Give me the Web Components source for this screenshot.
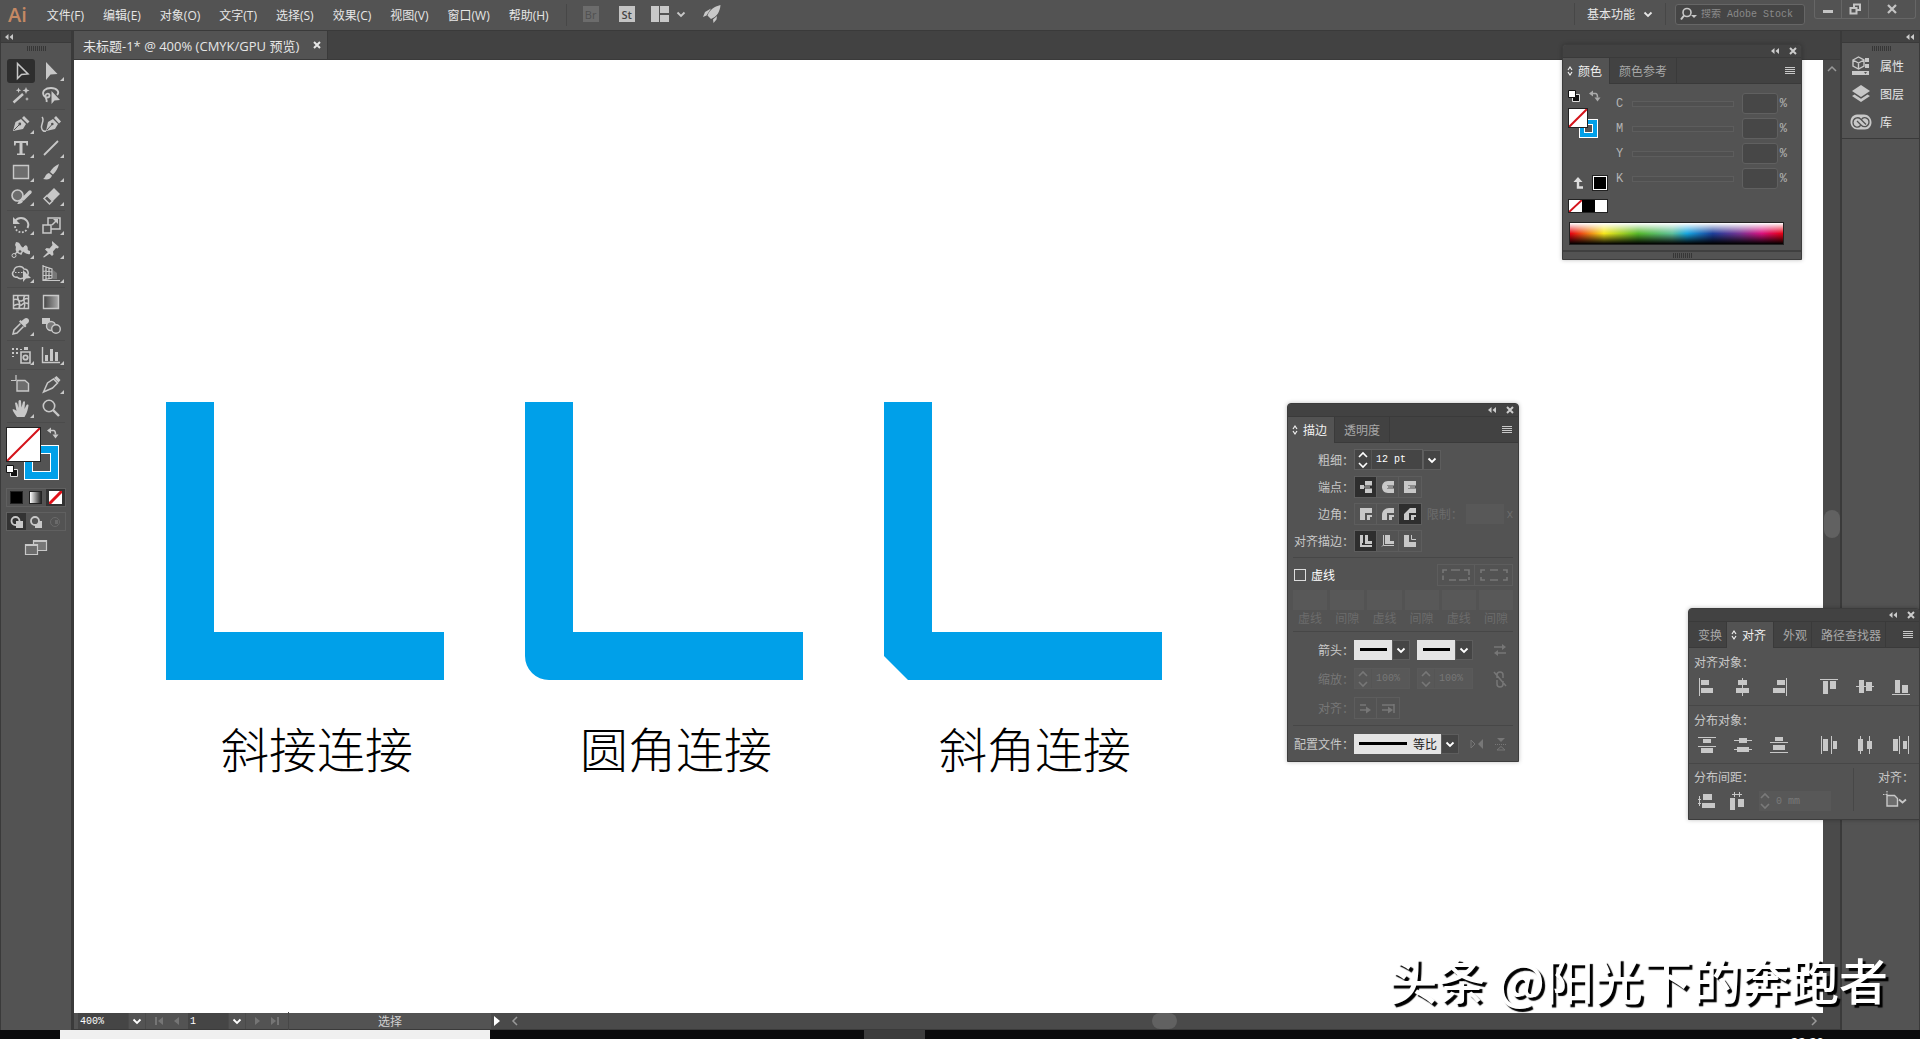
<!DOCTYPE html>
<html lang="zh-CN">
<head>
<meta charset="utf-8">
<title>未标题-1* @ 400% (CMYK/GPU 预览)</title>
<style>
  html, body { height: 100%; }
  body {
    margin: 0;
    overflow: hidden;
    font-family: "Open Sans", "Noto Sans CJK SC", sans-serif;
    font-size: 12px;
    color: #e6e6e6;
    background: #535353;
  }
</style>
</head>
<body>
<app-window></app-window>

<script>
// icons drawn with currentColor: [width, height, markup]
const L = 'fill="none" stroke="currentColor"';
const CUT = 'fill="none" stroke="#535353"';
const ICONS = {
  // small marks
  collapse: [10, 8, `<path d="M4.5 1v6L1 4zM9 1v6L5.5 4z"/>`],
  close: [10, 10, `<path ${L} stroke-width="2" d="M2 2l6 6M8 2L2 8"/>`],
  chevron: [12, 12, `<path ${L} stroke-width="1.8" d="M2.5 4.5L6 8l3.5-3.5"/>`],
  spin: [12, 18, `<path ${L} stroke-width="1.6" d="M2 6l4-4 4 4M2 12l4 4 4-4"/>`],
  updown: [6, 12, `<path ${L} stroke-width="1.2" d="M1 5l2-3 2 3M1 7l2 3 2-3"/>`],
  menu: [12, 10, `<path ${L} d="M1 1.5h10M1 3.5h10M1 5.5h10M1 7.5h10"/>`],
  grip: [20, 5, `<path fill="none" stroke="#363636" d="M1.5 0v5M3.5 0v5M5.5 0v5M7.5 0v5M9.5 0v5M11.5 0v5M13.5 0v5M15.5 0v5M17.5 0v5M19.5 0v5"/>`],
  up: [12, 12, `<path ${L} stroke-width="1.5" d="M2 8l4-4 4 4"/>`],
  left: [10, 12, `<path ${L} stroke-width="1.5" d="M7 2L3 6l4 4"/>`],
  right: [10, 12, `<path ${L} stroke-width="1.5" d="M3 2l4 4-4 4"/>`],
  first: [12, 12, `<path d="M2 2h2v8H2zM10 2v8L5 6z"/>`],
  prev: [8, 12, `<path d="M6 2v8L1 6z"/>`],
  next: [8, 12, `<path d="M2 2v8l5-4z"/>`],
  last: [12, 12, `<path d="M8 2h2v8H8zM2 2v8l5-4z"/>`],
  play: [8, 12, `<path d="M1 1v10l6-5z"/>`],
  // top bar
  arrange: [18, 16, `<path d="M0 0h8v16H0zM9 0h9v7H9zM9 9h9v7H9z"/>`],
  rocket: [18, 18, `<path d="M17.500 0C11 1.500 6.500 5 4.500 10.500L8 14c5.500-2 9-7 9.500-14zM8 3.500L2 7 0 12l3.500-1.500zM14 11l-4 3.500.500 3.500 3-3.500z"/>`],
  search: [18, 14, `<circle cx="7" cy="5.5" r="4" ${L} stroke-width="1.6"/><path ${L} stroke-width="2" d="M4 8.5L1 12.5"/><path d="M11 8h6l-3 3z"/>`],
  minimize: [12, 12, `<path d="M1 7h10v3H1z"/>`],
  restore: [12, 12, `<path ${L} stroke-width="2" d="M5 4V1.5h6V7H8.5M1.5 5h6v5.5h-6z"/>`],
  shut: [12, 12, `<path ${L} stroke-width="2.2" d="M2 2l8 8M10 2l-8 8"/>`],
  // right dock
  properties: [20, 20, `<path ${L} stroke-width="1.4" d="M2 4l5.5-3L13 4v6l-5.5 3L2 10zM2 4l5.5 3L13 4M7.5 7v6"/><path d="M14 2h4v4h-4zM14 8h4v4h-4zM1 15h17v4H1z"/><path fill="#535353" d="M13 16h3l-1.5 2z"/>`],
  layers: [20, 18, `<path d="M10 0l9 6-9 6-9-6z"/><path d="M3.5 9.5L1 11l9 6 9-6-2.5-1.5L10 13.8z"/>`],
  library: [22, 16, `<path d="M8 .5C3 0 .5 4 .5 8s3 7.5 7.5 7.5h7c4 0 6.500-3.500 6.500-7C21.500 4 18 .5 14 .5z"/><path ${CUT} stroke-width="1.3" d="M10.5 11.5c-2.5 3-7.5 1.5-7.5-3S8 2.500 10.500 5l5.500 5.500M7 7l4 4c3.500 3.500 8 1 8-3S13.500 2 11.500 5.500"/>`],
  // toolbox
  select: [28, 24, `<path ${L} stroke-width="1.5" d="M10.5 4.5v15l4-4 6.5-.5z"/>`],
  direct: [28, 24, `<path d="M9 3v18l4.5-5.5 7-.5z"/>`],
  wand: [28, 24, `<path ${L} stroke-width="2.5" d="M6.5 19.5L16 11"/><path d="M19 4l1 2.5 2.5 1-2.5 1-1 2.5-1-2.5-2.5-1 2.5-1zM11.5 4.5l.8 2 2 .8-2 .7-.8 2-.7-2-2-.7 2-.8zM20 14l.6 1.4 1.4.6-1.4.6L20 18l-.6-1.4L18 16l1.4-.6z"/>`],
  lasso: [28, 24, `<path ${L} stroke-width="1.8" d="M20 12c3-3 0-7-6-7S5 8.5 6.5 12s6 3 6 .5-3.5-2.5-4 0 2 4 1 6.5"/><path d="M14.5 8v13l3-3.5 5.5-.5z"/>`],
  pen: [28, 24, `<path d="M6 19l2.5-9 5.5-3 5 5-3 5zM15 6l2-2 5.5 5.5-2 2z"/><path ${CUT} d="M7 18l5.5-5.5"/><circle cx="12.8" cy="12" r="1.4" fill="#535353"/>`],
  curve: [28, 24, `<path d="M9 19l2-9 5-3 5 5-3 5zM17 6l2-2 5 5.5-2 2z"/><path ${CUT} d="M10 18l5-5.5"/><circle cx="15.3" cy="12" r="1.3" fill="#535353"/><path ${L} stroke-width="1.5" d="M5 5c3 3-1 7-.5 10.5S7 19.5 9 19"/>`],
  type: [28, 24, `<path d="M7 5h14v4.5h-1.5L19 7h-3.5v10.5H18V19h-8v-1.5h2.5V7H9l-.5 2.5H7z"/>`],
  line: [28, 24, `<path ${L} stroke-width="1.8" d="M7 19L21 5"/>`],
  rect: [28, 24, `<path fill="#6d6d6d" stroke="currentColor" stroke-width="1.4" d="M6.5 5.5h15v13h-15z"/>`],
  brush: [28, 24, `<path d="M22 4c-4 1.5-7 4.5-9 8l3 2.5c3-3 5-6 6-10.500zM12 13l3 2.500c-1 4-5 4.500-9 3.500 2.500-1 2-5 6-6z"/>`],
  blob: [28, 24, `<circle cx="10.5" cy="11.5" r="5.5" fill="#6d6d6d" stroke="currentColor" stroke-width="1.6"/><path ${L} stroke-width="3.5" stroke-linecap="round" d="M23 8l-7 7"/><path d="M10 20c1.5-1 1.5-4 4-4.5l2 2c-1 2-3.5 2.5-6 2.5z"/>`],
  eraser: [28, 24, `<path d="M17 4l6 6-7 7-6-6z"/><path ${L} stroke-width="1.5" d="M10 11.5l5.5 5.5-3 3L7 14.5z"/>`],
  rotate: [28, 24, `<path ${L} stroke-width="2" d="M8 8c3-4 9-4 12 0 1.5 2 1.5 5 .5 7"/><path d="M6 4v7h7z"/><path ${L} stroke-width="1.8" stroke-dasharray="1.8 1.6" d="M19.5 17c-3 3.5-9 3-11-1.5l-.8-3"/>`],
  scale: [28, 24, `<path ${L} stroke-width="1.5" d="M6 12h8v8H6zM11 12V5h12v11h-9M15 12l5-5"/><path d="M21 6v5l-5-5z"/>`],
  warp: [28, 24, `<path d="M9 5c4 0 4 3 6 5s3-4 5-1-1 4 3 5v3c-3 1-6-2-8-3s-5 3-6 0 1-3-1-6z"/><path ${L} stroke-width="1.4" d="M6 19l4-4 4 2 4-8"/><circle cx="7" cy="18.5" r="2" fill="#535353" stroke="currentColor"/><circle cx="13" cy="14.5" r="1.8" fill="#535353" stroke="currentColor"/>`],
  pin: [28, 24, `<path d="M15 4l7 6-1.5 1.5-1.5-.5-3 3.5.5 3L15 19l-7-6.5L9.5 11l3 .5 3-3.5-.5-2zM11 15l2 1.5L7 20.5l-1-.5z"/>`],
  builder: [28, 24, `<path ${L} stroke-width="1.5" d="M19 15c4-2 2-7-2-7-2-4-10-3-10 2-3 2-1 7 3 6 2 2 4 2 6 1"/><path ${L} stroke-dasharray="1.5 1.5" d="M8 11.5h12"/><path d="M16 9v12l3-3.5 5-.5z"/>`],
  perspective: [28, 24, `<path fill="#777" d="M16 9l4 3v6h-4z"/><path ${L} stroke-width="1.2" d="M6 4v16M6 5l9 3v9L6 19M9 6v12.5M12 7v10.5M6 10l9 1M6 14.5h9M6 19.5h17"/>`],
  mesh: [28, 24, `<path ${L} stroke-width="1.5" d="M6.5 5.5h15v13h-15zM6.5 10c4-3 5 2 8 1s4-4 7-2M6.5 16c5-4 7 0 8-1s4-3 7-1M11 5.5c-2 4 4 6 1 13M18 5.5c-4 4 2 7-1 13"/>`],
  gradient: [28, 24, `<defs><linearGradient id="g"><stop stop-color="#444"/><stop offset="1" stop-color="#aaa"/></linearGradient></defs><path fill="url(#g)" stroke="currentColor" stroke-width="1.4" d="M6.5 5.5h15v13h-15z"/>`],
  dropper: [28, 24, `<path d="M17 5c3-3 7 1 4 4l-2.500 2 1 1-1.500 1.500-6-6L13.500 6l1 1z"/><path ${L} stroke-width="1.5" d="M13.5 9.5L7 16l-1 4 4-1 6.5-6.5"/>`],
  blend: [28, 24, `<path d="M5 4h8v6H5z"/><circle cx="14" cy="12" r="4.5" fill="#777" stroke="currentColor" stroke-width="1.4"/><circle cx="19" cy="15" r="4.3" fill="#535353" stroke="currentColor" stroke-width="1.4"/>`],
  spray: [28, 24, `<path d="M5 5h2v2H5zM9 5h2v2H9zM5 9h2v2H5zM13 6h2v1h-2zM9 9h2v2H9zM5 13h2v1H5zM17 4h4v3h-4z"/><path ${L} stroke-width="1.6" d="M14 9h9v11h-9z"/><circle cx="18.5" cy="14.5" r="2.2" ${L} stroke-width="1.8"/>`],
  graph: [28, 24, `<path ${L} stroke-width="1.4" d="M5.5 4v15.5H23"/><path d="M8 12h3v6H8zM13 6h3v12h-3zM18 9h3v9h-3z"/>`],
  artboard: [28, 24, `<path ${L} stroke-width="1.2" d="M9 3v5M4 8.5h5"/><path fill="#6d6d6d" stroke="currentColor" stroke-width="1.4" d="M10 8.5h8l3.5 3v7.5H10z"/>`],
  slice: [28, 24, `<path ${L} stroke-width="1.5" d="M6.5 20l4-9 6-4 4 4-5 5z"/><path d="M17 6l2.5-2 4 4-2 2.5z"/>`],
  hand: [28, 24, `<path d="M10 21c-2-3-4-5-4.500-7.500 1.500-.8 2.500 0 4 1.500L8 7c1.500-1 2 0 2.500 1l1 4V5c1-1.500 2.200-1 2.500 0l.5 6.500L16 6c1-1.200 2-.5 2 .5L17.500 13l2-4c1.200-1 2.200-.3 2 .8-1 5-1.500 7.500-4 11.200z"/>`],
  zoom: [28, 24, `<circle cx="12" cy="10" r="5.7" ${L} stroke-width="1.6"/><path ${L} stroke-width="2.4" d="M16 14l6 6"/>`],
  screens: [24, 18, `<path fill="#777" stroke="currentColor" stroke-width="1.2" d="M9.5 1.5h13v10h-13z"/><path fill="#6d6d6d" stroke="currentColor" stroke-width="1.2" d="M1.5 5.5h12v10h-12z"/><path d="M9 1h14v2H9zM1 5h13v2H1z"/>`],
  swap: [12, 12, `<path ${L} stroke-width="1.6" d="M3 3.5h3.5c2 0 2 1.5 2 4"/><path d="M0 3.5L4 .5v6zM5.5 7.5h6l-3 4z"/>`],
  defaults: [12, 12, `<path fill="#111" stroke="#ddd" d="M4.5 4.5h7v7h-7z"/><path fill="#fff" stroke="#111" d="M.5.5h7v7h-7z"/>`],
  drawA: [16, 16, `<circle cx="6.5" cy="7" r="4" ${L} stroke-width="1.8"/><path d="M7 7h7v7H7z"/>`],
  drawB: [16, 16, `<path d="M7 7h7v7H7z"/><circle cx="7" cy="7" r="4" fill="#535353" stroke="currentColor" stroke-width="1.8"/>`],
  drawC: [16, 16, `<circle cx="8" cy="8" r="4.5" ${L}/><path d="M8 6h3v4H8z"/>`],
  revert: [12, 12, `<path ${L} stroke-width="2.4" d="M5 4v6.5h5"/><path d="M5 0l4.5 5h-9z"/>`],
  // stroke panel
  capButt: [16, 16, `<path d="M7 2h7v4.5H7zM7 9.5h7V14H7zM2 6h4v4H2zM6 7.5h6v1H6z"/>`],
  capRound: [16, 16, `<path d="M8 2h6v4.5H7v3h7V14H8C0 14 0 2 8 2z"/><path d="M6 7h2v2H6zM8 7.5h5v1H8z"/>`],
  capSquare: [16, 16, `<path d="M2 2h12v4.5H6v3h8V14H2z"/><path d="M6 7h2v2H6zM8 7.5h5v1H8z"/>`],
  joinMiter: [16, 16, `<path d="M2 2h12v5H7v7H2z"/><path d="M9 9h5v2h-2v3H9z"/>`],
  joinRound: [16, 16, `<path d="M14 2v5H7v7H2V9c0-4 3-7 7-7z"/><path d="M9 9h5v2h-2v3H9z"/>`],
  joinBevel: [16, 16, `<path d="M14 2v5H7v7H2V8l6-6z"/><path d="M9 9h5v2h-2v3H9z"/>`],
  alignC: [16, 16, `<path d="M2 2h3v8H4v2h10v2H2zM7 2h3v6h4v3H7z"/>`],
  alignI: [16, 16, `<path ${L} d="M3.5 2v10L2 13.5M3.5 12.5H14"/><path d="M5 2h5v6h4v3H5z"/>`],
  alignO: [16, 16, `<path d="M2 2h5v7h7v5H2z"/><path ${L} d="M9.5 2v4.5H14"/>`],
  dashA: [30, 14, `<path ${L} stroke-width="1.6" d="M2 12V7.5M2 5V2h4M10 2h9M23 2h5v5M28 12v-3M8 12h7M18 12h8"/>`],
  dashB: [30, 14, `<path ${L} stroke-width="1.6" d="M2 5V2h4M11 2h8M24 2h4v3M2 9v3h4M11 12h8M24 12h4V9"/>`],
  exchange: [14, 12, `<path ${L} stroke-width="1.6" d="M1 3h9M4 9h9"/><path d="M9 0l4 3-4 3zM5 6L1 9l4 3z"/>`],
  unlink: [14, 18, `<path ${L} stroke-width="1.5" d="M4 8V5a3 3 0 0 1 6 0v3M4 10v4a3 3 0 0 0 6 0v-3M1 2l12 14"/>`],
  tipA: [16, 12, `<path ${L} stroke-width="1.5" d="M2 3h6M2 8h6"/><path d="M8 4.5l5 3.5-5 3.5z"/>`],
  tipB: [16, 12, `<path ${L} stroke-width="1.5" d="M2 3h12M2 8h6M14 2v9"/><path d="M8 4.5l5 3.5-5 3.5z"/>`],
  flipH: [16, 12, `<path ${L} d="M2 2l4 4-4 4z"/><path d="M14 1v10L9 6z"/>`],
  flipV: [12, 14, `<path d="M2 1h8L6 5z"/><path ${L} stroke-dasharray="1 1" d="M0 7.5h12"/><path ${L} d="M2 13h8L6 9.5z"/>`],
  // align panel
  alLeft: [18, 18, `<path d="M1 0h1v18H1zM3 2h8v5H3zM3 10h12v5H3z"/>`],
  alMidH: [18, 18, `<path d="M8 0h1v18H8zM4 2h9v5H4zM2 10h13v5H2z"/>`],
  alRight: [18, 18, `<path d="M16 0h1v18h-1zM7 2h8v5H7zM3 10h12v5H3z"/>`],
  alTop: [18, 18, `<path d="M0 1h18v1H0zM3 3h5v13H3zM10 3h6v8h-6z"/>`],
  alMidV: [18, 18, `<path d="M0 8h18v1H0zM3 2h5v13H3zM10 4h6v9h-6z"/>`],
  alBottom: [18, 18, `<path d="M0 16h18v1H0zM3 2h5v13H3zM10 7h6v8h-6z"/>`],
  dsTop: [18, 18, `<path d="M0 1h18v1H0zM5 3h8v4H5zM0 10h18v1H0zM3 12h12v5H3z"/>`],
  dsMidV: [18, 18, `<path d="M0 4h18v1H0zM5 2h8v5H5zM0 13h18v1H0zM3 11h12v5H3z"/>`],
  dsBottom: [18, 18, `<path d="M0 6h18v1H0zM5 1h8v4H5zM0 16h18v1H0zM3 9h12v5H3z"/>`],
  dsLeft: [18, 18, `<path d="M1 0h1v18H1zM3 3h5v12H3zM11 0h1v18h-1zM13 5h4v8h-4z"/>`],
  dsMidH: [18, 18, `<path d="M4 0h1v18H4zM2 3h5v12H2zM13 0h1v18h-1zM11 5h5v8h-5z"/>`],
  dsRight: [18, 18, `<path d="M7 0h1v18H7zM1 3h5v12H1zM16 0h1v18h-1zM11 5h4v8h-4z"/>`],
  spV: [18, 18, `<path d="M6 2h9v6H6zM5 11h13v5H5zM2 4h1v10H2zM1 7h3v1H1zM1 11h3v1H1z"/>`],
  spH: [18, 18, `<path d="M2 6h5v12H2zM10 7h6v8h-6zM4 2h10v1H4zM6 0h1v5H6zM11 0h1v5h-1z"/>`],
  artMenu: [24, 18, `<path ${L} stroke-width="1.2" stroke-dasharray="1.5 1" d="M4 0v4M0 3.5h4"/><path fill="#6d6d6d" stroke="currentColor" stroke-width="1.4" d="M4 4.5h7.5l3 3V15H4z"/><path ${L} stroke-width="1.8" d="M16 8.5l3.5 3 3.5-3"/>`]
};

class BaseElement extends HTMLElement {
  constructor() {
    super();
    this.attachShadow({ mode: 'open' });
  }
  connectedCallback() {
    this.shadowRoot.innerHTML = `
      <style>
        * { box-sizing: border-box; }
        button, input, select {
          font: inherit; color: inherit; margin: 0; padding: 0;
          border: 0; background: none; border-radius: 0; appearance: none;
        }
        button { display: inline-flex; align-items: center; justify-content: center; }
        a { color: inherit; text-decoration: none; }
      </style>` + this.render();
  }
}

class UiIcon extends BaseElement {
  render() {
    const [w, h, body] = ICONS[this.getAttribute('name')];
    const corner = this.hasAttribute('more') ? '<path d="M27 18v4h-4z"/>' : '';
    return `
      <style>
        :host { display: inline-block; flex: none; width: ${w}px; height: ${h}px; }
        svg { display: block; }
      </style>
      <svg width="${w}" height="${h}" viewBox="0 0 ${w} ${h}" fill="currentColor" aria-hidden="true">${body}${corner}</svg>`;
  }
}

const icon = name => `<ui-icon name="${name}"></ui-icon>`;

class MenuBar extends BaseElement {
  render() {
    const menus = ['文件(F)', '编辑(E)', '对象(O)', '文字(T)', '选择(S)', '效果(C)', '视图(V)', '窗口(W)', '帮助(H)'];
    return `
      <style>
        :host {
          display: flex; align-items: center; justify-content: space-between;
          height: 31px; background: #535353; border-bottom: 1px solid #3a3a3a;
        }
        .side, nav { display: flex; align-items: center; }
        .logo { font-size: 20px; font-weight: 600; color: #c58964; line-height: 28px; padding: 0 20px 0 8px; }
        nav { gap: 19px; }
        hr { width: 1px; height: 22px; margin: 0; border: 0; background: #474747; }
        nav + hr { margin-left: 17px; }
        .app { width: 16px; height: 16px; font-size: 11px; background: #6c6c6c; color: #505050; }
        .app.on { background: #c4c4c4; color: #444; font-weight: 600; }
        .tools { display: flex; align-items: center; gap: 16px; margin: 0 0 2px 16px; color: #c8c8c8; }
        .app:first-child { margin-right: 4px; }
        .layout { gap: 6px; }
        .right { align-self: flex-start; height: 28px; }
        .work { gap: 7px; padding: 0 11px 0 12px; }
        .find {
          display: flex; align-items: center; gap: 3px; width: 130px; height: 21px; margin: 0 9px; padding: 0 4px;
          border: 1px solid #666; border-radius: 3px; background: #454545; color: #c8c8c8;
        }
        .find input { min-width: 0; flex: 1; font: 10px "Liberation Mono", "Noto Sans CJK SC", monospace; }
        .find input::placeholder { color: #8a8a8a; opacity: 1; }
        .win {
          display: flex; align-self: flex-start; height: 19px; margin-right: 4px; color: #c4c4c4;
          border: 1px solid #666; border-top: 0; border-radius: 0 0 3px 3px;
        }
        .win button { width: 27px; border-right: 1px solid #666; }
        .win button:last-child { width: 46px; border: 0; }
      </style>
      <div class="side">
        <span class="logo">Ai</span>
        <nav>${menus.map(m => `<a href="#">${m}</a>`).join('')}</nav>
        <hr>
        <div class="tools">
          <button class="app">Br</button>
          <button class="app on">St</button>
          <button class="layout" aria-label="排列文档">${icon('arrange')}${icon('chevron')}</button>
          <button aria-label="GPU 性能">${icon('rocket')}</button>
        </div>
      </div>
      <div class="side right">
        <hr>
        <button class="work">基本功能 ${icon('chevron')}</button>
        <hr>
        <label class="find">${icon('search')}<input placeholder="搜索 Adobe Stock" aria-label="搜索 Adobe Stock"></label>
        <div class="win">
          <button aria-label="最小化">${icon('minimize')}</button>
          <button aria-label="还原">${icon('restore')}</button>
          <button aria-label="关闭">${icon('shut')}</button>
        </div>
      </div>`;
  }
}

class ToolBox extends BaseElement {
  render() {
    // a trailing + marks tools that open a flyout
    const groups = [
      ['select', 'direct+', 'wand', 'lasso'],
      ['pen+', 'curve', 'type+', 'line+', 'rect+', 'brush+', 'blob+', 'eraser+'],
      ['rotate+', 'scale+', 'warp+', 'pin+', 'builder+', 'perspective+'],
      ['mesh', 'gradient', 'dropper+', 'blend'],
      ['spray+', 'graph+'],
      ['artboard', 'slice+', 'hand+', 'zoom']
    ];
    const tool = t => {
      const name = t.replace('+', '');
      return `<button class="${name}" aria-label="${name}"><ui-icon name="${name}"${t.endsWith('+') ? ' more' : ''}></ui-icon></button>`;
    };
    return `
      <style>
        :host {
          display: flex; flex-direction: column; width: 74px; background: #535353; color: #c8c8c8;
          border: solid #3a3a3a; border-width: 0 3px 0 1px;
        }
        header { display: flex; align-items: center; height: 12px; background: #424242; border-bottom: 1px solid #3a3a3a; padding: 0 3px; }
        .grip { display: flex; justify-content: center; padding: 3px 0 8px; }
        .group {
          display: grid; grid-template-columns: 28px 28px; gap: 0 2px; margin: 0 6px 2px;
          padding-bottom: 2px; border-bottom: 1px solid #4b4b4b;
        }
        .group button { height: 24px; }
        .select { background: #2e2e2e; border-radius: 3px; }
        .paint {
          display: grid; grid-template-columns: 18px 17px 18px; grid-template-rows: 18px 17px 18px;
          margin: 2px 0 0 5px;
        }
        .fill { grid-area: 1 / 1 / 3 / 3; z-index: 1; background: #fff; border: 1px solid #222; }
        .stroke { grid-area: 2 / 2 / 4 / 4; background: #00a0e9; border: 1px solid #fff; padding: 7px; }
        .stroke i { flex: 1; align-self: stretch; background: #535353; border: 1px solid #fff; }
        .swap { grid-area: 1 / 3; justify-content: flex-end; align-items: flex-start; }
        .reset { grid-area: 3 / 1; justify-content: flex-start; }
        .row { display: grid; grid-template-columns: 1fr 1fr 1fr; margin: 8px 5px 0; border: 1px solid #606060; }
        .row button { height: 17px; }
        .row + .row { margin-top: 5px; }
        .row .on { background: #333; }
        .row i { width: 13px; height: 13px; border: 1px solid #222; background: #000; }
        .row .grad { background: linear-gradient(90deg, #fff, #222); }
        .dim { color: #6a6a6a; }
        .screen { margin-top: 8px; }
      </style>
      <header>${icon('collapse')}</header>
      <div class="grip">${icon('grip')}</div>
      ${groups.map(g => `<div class="group">${g.map(tool).join('')}</div>`).join('')}
      <div class="paint">
        <button class="fill" aria-label="填色">
          <svg width="33" height="33"><path d="M0 33L33 0" stroke="#d4131a" stroke-width="2"/></svg>
        </button>
        <button class="swap" aria-label="互换填色和描边">${icon('swap')}</button>
        <button class="reset" aria-label="默认填色和描边">${icon('defaults')}</button>
        <button class="stroke" aria-label="描边"><i></i></button>
      </div>
      <div class="row">
        <button aria-label="颜色"><i></i></button>
        <button aria-label="渐变"><i class="grad"></i></button>
        <button class="on" aria-label="无"><svg width="13" height="13"><path fill="#fff" d="M0 0h13v13H0z"/><path d="M0 13L13 0" stroke="#e01018" stroke-width="3"/></svg></button>
      </div>
      <div class="row">
        <button class="on" aria-label="正常绘图">${icon('drawA')}</button>
        <button aria-label="背面绘图">${icon('drawB')}</button>
        <button class="dim" aria-label="内部绘图">${icon('drawC')}</button>
      </div>
      <button class="screen" aria-label="更改屏幕模式">${icon('screens')}</button>`;
  }
}

class DocumentTabs extends BaseElement {
  render() {
    return `
      <style>
        :host { display: flex; background: #424242; border-bottom: 1px solid #3a3a3a; }
        .tab { display: flex; align-items: center; gap: 13px; height: 28px; padding: 0 5px 0 9px; background: #535353; border-right: 1px solid #3a3a3a; font-size: 13px; }
      </style>
      <div class="tab"><span>未标题-1* @ 400% (CMYK/GPU 预览)</span><button aria-label="关闭文档">${icon('close')}</button></div>`;
  }
}

class JoinFigure extends BaseElement {
  render() {
    const shapes = {
      miter: 'M0 0h48v230h230v48H0z',
      round: 'M0 0h48v230h230v48H24A24 24 0 0 1 0 254z',
      bevel: 'M0 0h48v230h230v48H24L0 254z'
    };
    return `
      <style>
        :host { display: block; width: 278px; color: #000; }
        figure { margin: 0; }
        svg { display: block; }
        figcaption {
          padding: 31px 0 0 24px; text-align: center; white-space: nowrap;
          font: 300 48px/72px "Noto Sans CJK SC", sans-serif;
        }
      </style>
      <figure>
        <svg width="278" height="278"><path fill="#00a0e9" d="${shapes[this.getAttribute('join')]}"/></svg>
        <figcaption><slot></slot></figcaption>
      </figure>`;
  }
}

class ArtCanvas extends BaseElement {
  render() {
    return `
      <style>
        :host { display: flex; gap: 81px; padding: 342px 0 0 92px; background: #fff; overflow: hidden; }
      </style>
      <join-figure join="miter">斜接连接</join-figure>
      <join-figure join="round">圆角连接</join-figure>
      <join-figure join="bevel">斜角连接</join-figure>`;
  }
}

class ScrollRail extends BaseElement {
  render() {
    return `
      <style>
        :host { display: flex; flex-direction: column; align-items: center; width: 17px; background: #4a4a4a; color: #999; padding: 3px 0 40px; }
        .track { flex: 1; display: flex; flex-direction: column; justify-content: center; }
        .thumb { width: 16px; height: 28px; border-radius: 8px; background: #616161; }
      </style>
      ${icon('up')}
      <div class="track"><div class="thumb"></div></div>`;
  }
}

class StatusBar extends BaseElement {
  render() {
    return `
      <style>
        :host {
          display: flex; align-items: center; height: 17px; background: #4a4a4a; border-bottom: 1px solid #3a3a3a;
          font: 10px "Liberation Mono", "Noto Sans CJK SC", monospace; color: #fff;
        }
        .info { display: flex; align-items: center; align-self: stretch; width: 417px; padding-left: 4px; background: #535353; }
        input { height: 16px; padding-left: 2px; background: #454545; }
        .zoom { width: 50px; }
        .page { width: 40px; }
        .drop { width: 18px; height: 16px; border: 1px solid #4a4a4a; border-width: 0 1px; }
        .nav { display: flex; align-items: center; justify-content: space-evenly; width: 42px; color: #757575; }
        .tool { flex: 1; text-align: center; font-size: 12px; color: #d0d0d0; border-left: 1px solid #474747; }
        .play { margin-left: 2px; }
        .scroll { flex: 1; display: flex; align-items: center; justify-content: space-between; padding: 0 21px 0 9px; color: #999; }
        .thumb { width: 25px; height: 16px; border-radius: 8px; background: #616161; }
      </style>
      <div class="info">
        <input class="zoom" value="400%" aria-label="缩放">
        <button class="drop" aria-label="缩放级别">${icon('chevron')}</button>
        <span class="nav">${icon('first')}${icon('prev')}</span>
        <input class="page" value="1" aria-label="画板">
        <button class="drop" aria-label="画板列表">${icon('chevron')}</button>
        <span class="nav">${icon('next')}${icon('last')}</span>
        <span class="tool">选择</span>
      </div>
      <button class="play" aria-label="状态">${icon('play')}</button>
      <div class="scroll">${icon('left')}<div class="thumb"></div>${icon('right')}</div>`;
  }
}

class PanelDock extends BaseElement {
  render() {
    const items = [['properties', '属性'], ['layers', '图层'], ['library', '库']];
    return `
      <style>
        :host { display: flex; flex-direction: column; width: 80px; background: #535353; border: solid #3a3a3a; border-width: 0 1px 0 2px; }
        header { display: flex; align-items: center; justify-content: flex-end; height: 12px; background: #424242; border-bottom: 1px solid #3a3a3a; padding: 0 4px; color: #ccc; }
        .grip { display: flex; justify-content: center; padding: 3px 0 1px; }
        ul { list-style: none; margin: 0; padding: 0 0 2px 8px; border-bottom: 1px solid #3a3a3a; }
        button { height: 28px; gap: 8px; }
        b { display: flex; justify-content: center; width: 22px; color: #c8c8c8; }
      </style>
      <header>${icon('collapse')}</header>
      <div class="grip">${icon('grip')}</div>
      <ul>${items.map(i => `<li><button><b>${icon(i[0])}</b>${i[1]}</button></li>`).join('')}</ul>`;
  }
}

// floating window: tabs="a,b,c" active="1", body in the default slot
class FloatPanel extends BaseElement {
  render() {
    const active = Number(this.getAttribute('active'));
    const tabs = this.getAttribute('tabs').split(',').map((t, i) => i === active
      ? `<button class="tab on" role="tab" aria-selected="true">${icon('updown')}${t}</button>`
      : `<button class="tab" role="tab">${t}</button>`);
    return `
      <style>
        :host { display: block; background: #535353; border: 1px solid #3c3c3c; border-radius: 4px 4px 0 0; box-shadow: 0 0 4px rgba(0, 0, 0, .25); }
        header { display: flex; justify-content: flex-end; align-items: center; gap: 8px; height: 12px; padding-right: 3px; background: #424242; border-radius: 4px 4px 0 0; color: #ccc; }
        .tabs { display: flex; height: 27px; background: #424242; border: solid #3a3a3a; border-width: 1px 0; }
        .tab { height: 26px; padding: 0 var(--tab-end, 9px) 0 9px; border-right: 1px solid #3a3a3a; color: #a8a8a8; white-space: nowrap; }
        .on { gap: 5px; padding: 0 7px 0 4px; background: #535353; color: #f0f0f0; }
        .more { margin-left: auto; padding-right: 5px; color: #c8c8c8; }
      </style>
      <header>${icon('collapse')}${icon('close')}</header>
      <div class="tabs" role="tablist">${tabs.join('')}<button class="more" aria-label="面板菜单">${icon('menu')}</button></div>
      <slot></slot>`;
  }
}

class ColorPanel extends BaseElement {
  render() {
    return `
      <style>
        :host { display: block; width: 240px; }
        .body { display: flex; padding: 6px 14px 0 5px; }
        .left { flex: none; width: 48px; }
        .marks { display: flex; justify-content: space-between; width: 33px; color: #aaa; }
        .paint { display: grid; grid-template-columns: 11px 9px 10px; grid-template-rows: 11px 9px 10px; margin: 6px 0 38px; }
        .fill { grid-area: 1 / 1 / 3 / 3; z-index: 1; background: #fff; border: 1px solid #222; }
        .stroke { grid-area: 2 / 2 / 4 / 4; background: #00a0e9; border: 1px solid #fff; padding: 4px; }
        .stroke i { flex: 1; align-self: stretch; background: #535353; border: 1px solid #fff; }
        .last { display: flex; justify-content: space-between; align-items: center; width: 34px; margin-left: 5px; color: #ddd; }
        .last i { width: 14px; height: 14px; background: #000; border: 1px solid #fff; outline: 1px solid #222; }
        .quick { display: flex; width: 40px; margin-top: 9px; border: 1px solid #222; }
        .quick button { flex: 1; height: 12px; background: #000; }
        .quick .white { background: #fff; }
        .sliders { flex: 1; min-width: 0; padding-top: 1px; color: #b4b4b4; font: 12px "Liberation Mono", monospace; }
        label { display: flex; align-items: center; height: 25px; }
        label span { width: 16px; }
        .range { flex: 1; min-width: 0; height: 6px; border: 1px solid #5d5d5d; background: #505050; }
        .range::-webkit-slider-thumb { appearance: none; width: 0; }
        .num { flex: none; width: 36px; height: 21px; margin: 0 2px 0 8px; border: 1px solid #606060; border-radius: 3px; background: #474747; }
        .spectrum {
          height: 23px; margin: 9px 17px 5px 6px; border: 1px solid #222;
          background:
            linear-gradient(#fff, rgba(255, 255, 255, 0) 50%, rgba(0, 0, 0, 0) 50%, #000),
            linear-gradient(90deg, #e60012, #f6e71d 16%, #56b82c 32%, #5fbf9a 48%, #17a5e0 55%, #1d3f9a 67%, #7a3593 80%, #d8127f 90%, #e60012);
        }
        footer { display: flex; justify-content: center; height: 9px; padding-top: 1px; border-top: 2px solid #404040; }
      </style>
      <float-panel tabs="颜色,颜色参考" active="0">
        <div class="body">
          <div class="left">
            <div class="marks">${icon('defaults')}${icon('swap')}</div>
            <div class="paint">
              <button class="fill" aria-label="填色"><svg width="18" height="18"><path d="M0 18L18 0" stroke="#d4131a" stroke-width="2"/></svg></button>
              <button class="stroke" aria-label="描边"><i></i></button>
            </div>
            <div class="last">${icon('revert')}<i></i></div>
            <div class="quick">
              <button class="white" aria-label="无"><svg width="13" height="12"><path d="M0 12L13 0" stroke="#d4131a" stroke-width="2"/></svg></button>
              <button aria-label="黑色"></button>
              <button class="white" aria-label="白色"></button>
            </div>
          </div>
          <div class="sliders">
            ${['C', 'M', 'Y', 'K'].map(c => `
            <label><span>${c}</span><input class="range" type="range" disabled aria-label="${c}"><input class="num" disabled aria-label="${c} 数值">%</label>`).join('')}
          </div>
        </div>
        <div class="spectrum"></div>
        <footer>${icon('grip')}</footer>
      </float-panel>`;
  }
}

class StrokePanel extends BaseElement {
  render() {
    const set = (names, on) => `<span class="set">${names.map((n, i) =>
      `<button class="${i === on ? 'on' : 'off'}" aria-label="${n}">${icon(n)}</button>`).join('')}</span>`;
    const arrow = label => `<span class="pair"><button class="arrow" aria-label="${label}"><i></i></button><button class="drop" aria-label="${label}列表">${icon('chevron')}</button></span>`;
    const scale = label => `<span class="pair spin dim">${icon('spin')}<input value="100%" disabled aria-label="${label}"></span>`;
    return `
      <style>
        :host { display: block; width: 232px; color: #c8c8c8; }
        .row { display: flex; align-items: center; height: 27px; padding: 0 5px; }
        .row.tall { height: 29px; }
        .row > .name { width: 61px; text-align: right; white-space: nowrap; }
        .body { padding: 3px 0; }
        hr { height: 1px; margin: 3px 5px; border: 0; background: #474747; }
        .dashes + hr { margin-top: 2px; }
        .spin { display: flex; align-items: center; height: 21px; border: 1px solid #606060; background: #454545; color: #fff; }
        .spin ui-icon { margin: 0 2px; }
        .spin input { width: 51px; height: 19px; padding-left: 4px; font: 10px "Liberation Mono", monospace; border-left: 1px solid #555; }
        .pair { display: flex; width: 56px; margin-right: 7px; }
        .pair input { width: 38px; }
        .drop { width: 18px; height: 20px; border: 1px solid #5d5d5d; background: #454545; color: #fff; }
        .set { display: flex; border: 1px solid #5d5d5d; }
        .set button { width: 22px; height: 20px; border-right: 1px solid #5d5d5d; }
        .set button:last-child { border: 0; }
        .set .on { background: #2e2e2e; }
        .dash .set button { width: 37px; }
        .dim { color: #777; }
        .dim.spin { color: #777; background: #585858; border-color: #5a5a5a; }
        .limit { display: flex; align-items: center; gap: 3px; margin-left: auto; color: #6c6c6c; }
        .limit input { width: 38px; height: 20px; background: #585858; }
        .check { display: flex; align-items: center; gap: 5px; color: #fff; padding-left: 1px; }
        .check input { width: 12px; height: 12px; border: 1px solid #ddd; }
        .dashes { display: grid; grid-template-columns: repeat(6, 1fr); gap: 3px; padding: 2px 5px 1px; text-align: center; color: #6c6c6c; line-height: 18px; }
        .dashes label { display: block; }
        .dashes input { display: block; width: 100%; height: 20px; background: #585858; }
        .arrow { width: 38px; height: 20px; background: #e4e4e4; }
        .arrow i { width: 27px; height: 3px; background: #000; }
        .profile { gap: 6px; width: 87px; color: #222; padding-left: 1px; }
        .profile i { width: 48px; }
        .end { margin-left: auto; color: #777; }
        button.end:last-child { margin-right: 6px; }
      </style>
      <float-panel tabs="描边,透明度" active="0">
        <div class="body">
          <div class="row"><label class="name" for="w">粗细：</label>
            <span class="spin">${icon('spin')}<input id="w" value="12 pt"></span><button class="drop" aria-label="粗细列表">${icon('chevron')}</button></div>
          <div class="row"><span class="name">端点：</span>${set(['capButt', 'capRound', 'capSquare'], 0)}</div>
          <div class="row"><span class="name">边角：</span>${set(['joinMiter', 'joinRound', 'joinBevel'], 2)}
            <label class="limit">限制：<input disabled>x</label></div>
          <div class="row"><span class="name">对齐描边：</span>${set(['alignC', 'alignI', 'alignO'], 0)}</div>
          <hr>
          <div class="row"><label class="check"><input type="checkbox">虚线</label>
            <span class="end dash">${set(['dashA', 'dashB'])}</span></div>
          <div class="dashes">${[0, 1, 2].map(() => '<label><input disabled>虚线</label><label><input disabled>间隙</label>').join('')}</div>
          <hr>
          <div class="row tall"><span class="name">箭头：</span>${arrow('起点箭头')}${arrow('终点箭头')}<button class="end" aria-label="互换">${icon('exchange')}</button></div>
          <div class="row tall"><span class="name dim">缩放：</span>${scale('起点缩放')}${scale('终点缩放')}<button class="end" aria-label="链接">${icon('unlink')}</button></div>
          <div class="row tall"><span class="name dim">对齐：</span><span class="dim">${set(['tipA', 'tipB'])}</span></div>
          <hr>
          <div class="row tall"><span class="name">配置文件：</span>
            <button class="arrow profile"><i></i>等比</button><button class="drop" aria-label="配置列表">${icon('chevron')}</button>
            <button class="end" aria-label="纵向翻转">${icon('flipH')}</button><button class="end" aria-label="横向翻转">${icon('flipV')}</button></div>
        </div>
      </float-panel>`;
  }
}

class AlignPanel extends BaseElement {
  render() {
    const icons = names => `<div class="icons">${names.map(n => `<button aria-label="${n}">${icon(n)}</button>`).join('')}</div>`;
    return `
      <style>
        :host { display: block; width: 232px; --tab-end: 4px; color: #c8c8c8; }
        section { padding: 5px 5px 9px; border-bottom: 1px solid #474747; }
        h3 { margin: 0 0 5px; font-size: 12px; font-weight: 400; line-height: 20px; }
        .icons { display: flex; gap: 18px; padding-left: 4px; }
        .icons button:nth-child(4) { margin-left: 14px; }
        .foot { display: flex; border: 0; padding: 4px 5px 8px; }
        .foot h3 { margin-bottom: 3px; }
        .foot .gaps { flex: 1; border-right: 1px solid #474747; }
        .foot .icons { gap: 13px; align-items: center; padding-left: 3px; }
        .mm { display: flex; align-items: center; gap: 2px; height: 20px; background: #585858; color: #7a7a7a; }
        .mm input { width: 58px; padding-left: 3px; font: 10px "Liberation Mono", monospace; }
        .to { width: 60px; text-align: right; }
        .to button { display: flex; margin-left: auto; padding-right: 7px; }
      </style>
      <float-panel tabs="变换,对齐,外观,路径查找器" active="1">
        <section><h3>对齐对象：</h3>${icons(['alLeft', 'alMidH', 'alRight', 'alTop', 'alMidV', 'alBottom'])}</section>
        <section><h3>分布对象：</h3>${icons(['dsTop', 'dsMidV', 'dsBottom', 'dsLeft', 'dsMidH', 'dsRight'])}</section>
        <section class="foot">
          <div class="gaps">
            <h3>分布间距：</h3>
            <div class="icons">
              <button aria-label="垂直分布间距">${icon('spV')}</button>
              <button aria-label="水平分布间距">${icon('spH')}</button>
              <span class="mm">${icon('spin')}<input value="0 mm" disabled aria-label="间距值"></span>
            </div>
          </div>
          <div class="to"><h3>对齐：</h3><button aria-label="对齐画板">${icon('artMenu')}</button></div>
        </section>
      </float-panel>`;
  }
}

class TaskBar extends BaseElement {
  render() {
    return `
      <style>
        :host { display: flex; height: 9px; overflow: hidden; background: #0b0b0c; color: #fff; padding-left: 60px; }
        .search { width: 430px; background: #f0f0f0; }
        .active { width: 61px; margin-left: 374px; background: #3d3d3d; }
        time { margin: 4px 96px 0 auto; line-height: 16px; font-size: 13px; }
      </style>
      <div class="search"></div><div class="active"></div><time>22:20</time>`;
  }
}

class AppWindow extends BaseElement {
  render() {
    return `
      <style>
        :host { display: flex; flex-direction: column; height: 100vh; position: relative; overflow: hidden; }
        main { flex: 1; display: flex; min-height: 0; }
        .doc { flex: 1; display: flex; flex-direction: column; min-width: 0; }
        .view { flex: 1; display: flex; min-height: 0; }
        art-canvas { flex: 1; min-width: 0; }
        color-panel, stroke-panel, align-panel, .mark { position: absolute; }
        color-panel { right: 118px; top: 44px; }
        stroke-panel { left: 1287px; top: 403px; }
        align-panel { right: 0; top: 608px; }
        .mark {
          right: 32px; bottom: 25px; margin: 0; color: #fff; white-space: nowrap;
          font: 500 49px/70px "Noto Sans CJK SC", sans-serif; text-shadow: 3px 3px 1px #000;
        }
      </style>
      <menu-bar></menu-bar>
      <main>
        <tool-box></tool-box>
        <div class="doc">
          <document-tabs></document-tabs>
          <div class="view"><art-canvas></art-canvas><scroll-rail></scroll-rail></div>
          <status-bar></status-bar>
        </div>
        <panel-dock></panel-dock>
      </main>
      <task-bar></task-bar>
      <color-panel></color-panel>
      <stroke-panel></stroke-panel>
      <align-panel></align-panel>
      <p class="mark">头条 @阳光下的奔跑者</p>`;
  }
}

customElements.define('ui-icon', UiIcon);
customElements.define('menu-bar', MenuBar);
customElements.define('tool-box', ToolBox);
customElements.define('document-tabs', DocumentTabs);
customElements.define('join-figure', JoinFigure);
customElements.define('art-canvas', ArtCanvas);
customElements.define('scroll-rail', ScrollRail);
customElements.define('status-bar', StatusBar);
customElements.define('panel-dock', PanelDock);
customElements.define('float-panel', FloatPanel);
customElements.define('color-panel', ColorPanel);
customElements.define('stroke-panel', StrokePanel);
customElements.define('align-panel', AlignPanel);
customElements.define('task-bar', TaskBar);
customElements.define('app-window', AppWindow);
</script>
</body>
</html>
